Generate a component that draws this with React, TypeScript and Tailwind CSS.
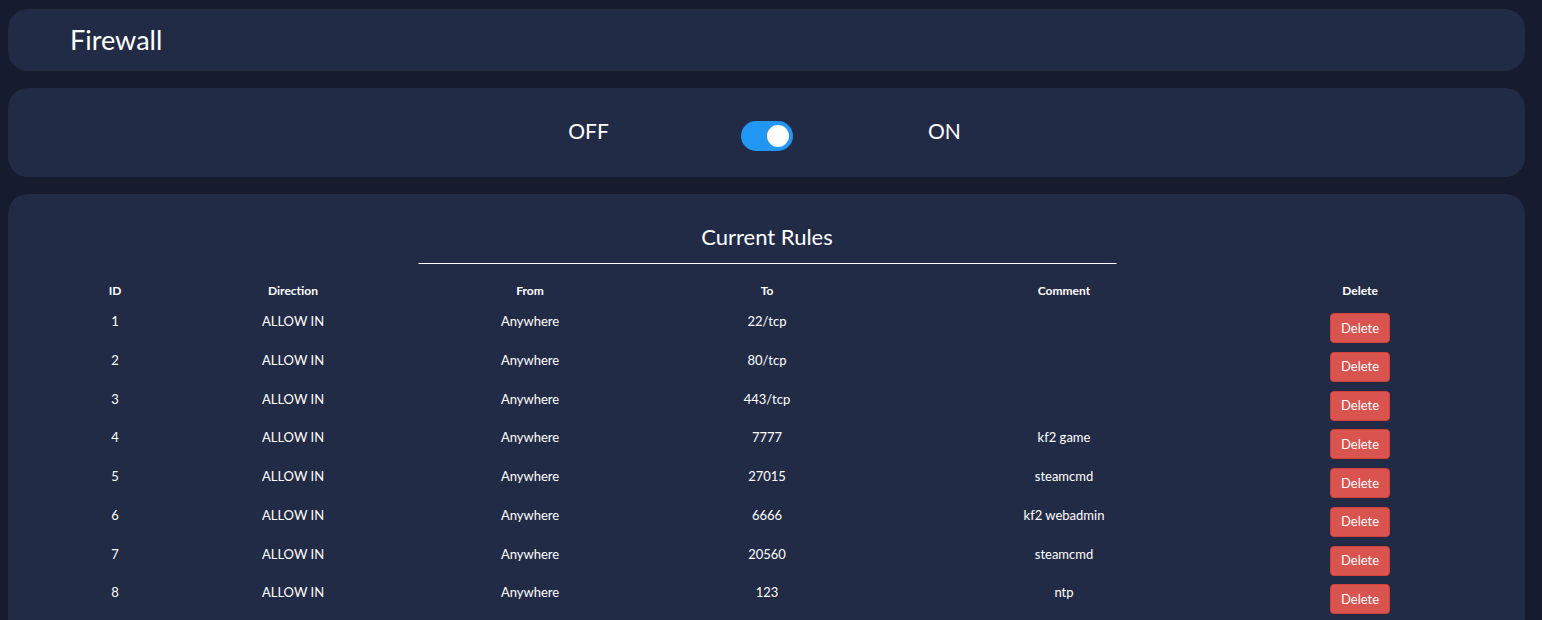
import React from "react";

const rules = [
  { id: 1, dir: "ALLOW IN", from: "Anywhere", to: "22/tcp", comment: "" },
  { id: 2, dir: "ALLOW IN", from: "Anywhere", to: "80/tcp", comment: "" },
  { id: 3, dir: "ALLOW IN", from: "Anywhere", to: "443/tcp", comment: "" },
  { id: 4, dir: "ALLOW IN", from: "Anywhere", to: "7777", comment: "kf2 game" },
  { id: 5, dir: "ALLOW IN", from: "Anywhere", to: "27015", comment: "steamcmd" },
  { id: 6, dir: "ALLOW IN", from: "Anywhere", to: "6666", comment: "kf2 webadmin" },
  { id: 7, dir: "ALLOW IN", from: "Anywhere", to: "20560", comment: "steamcmd" },
  { id: 8, dir: "ALLOW IN", from: "Anywhere", to: "123", comment: "ntp" },
];

const cols = "grid grid-cols-[130px_226px_248px_226px_368px_224px]";

export default function App() {
  return (
    <div
      className="h-[620px] overflow-hidden bg-[#161b30] pt-[9px] pl-[8px] pr-[17px] text-white flex flex-col gap-[17px]"
      style={{ fontFamily: "Lato, 'Open Sans', sans-serif" }}
    >
      <div className="h-[62px] shrink-0 rounded-[20px] bg-[#222b46] pl-[62px] flex items-center">
        <h1 className="text-[27px] leading-none -mt-[2px]">Firewall</h1>
      </div>

      <div className="h-[89px] shrink-0 rounded-[20px] bg-[#222b46] flex justify-center pt-[28px]">
        <div className="w-[178px] text-center text-[21px] leading-[30px]">OFF</div>
        <div className="w-[178px] flex justify-center">
          <div className="mt-[5px] w-[52px] h-[30px] rounded-full bg-[#2196f3] relative">
            <div className="absolute right-[4px] top-[4px] w-[22px] h-[22px] rounded-full bg-white" />
          </div>
        </div>
        <div className="w-[178px] text-center text-[21px] leading-[30px]">ON</div>
      </div>

      <div className="flex-1 rounded-t-[20px] bg-[#222b46] pt-[28px]">
        <div className="w-[698px] mx-auto border-b border-white pb-[11px] text-center text-[22px] leading-[30px] translate-x-[0.5px]">
          Current Rules
        </div>
        <div className="ml-[42px] mt-[15px]">
          <div className={`${cols} h-[30px] text-[12px] font-bold leading-6 text-center`}>
            <div>ID</div>
            <div>Direction</div>
            <div>From</div>
            <div>To</div>
            <div>Comment</div>
            <div>Delete</div>
          </div>
          {rules.map((r) => (
            <div key={r.id} className={`${cols} h-[38.75px] text-[13px] leading-6 text-center`}>
              <div>{r.id}</div>
              <div>{r.dir}</div>
              <div>{r.from}</div>
              <div>{r.to}</div>
              <div>{r.comment}</div>
              <div className="flex justify-center">
                <button className="mt-[4px] h-[30px] w-[60px] rounded-[4px] bg-[#d9534f] border border-[#d43f3a] text-[13px] text-white leading-none">
                  Delete
                </button>
              </div>
            </div>
          ))}
        </div>
      </div>
    </div>
  );
}
